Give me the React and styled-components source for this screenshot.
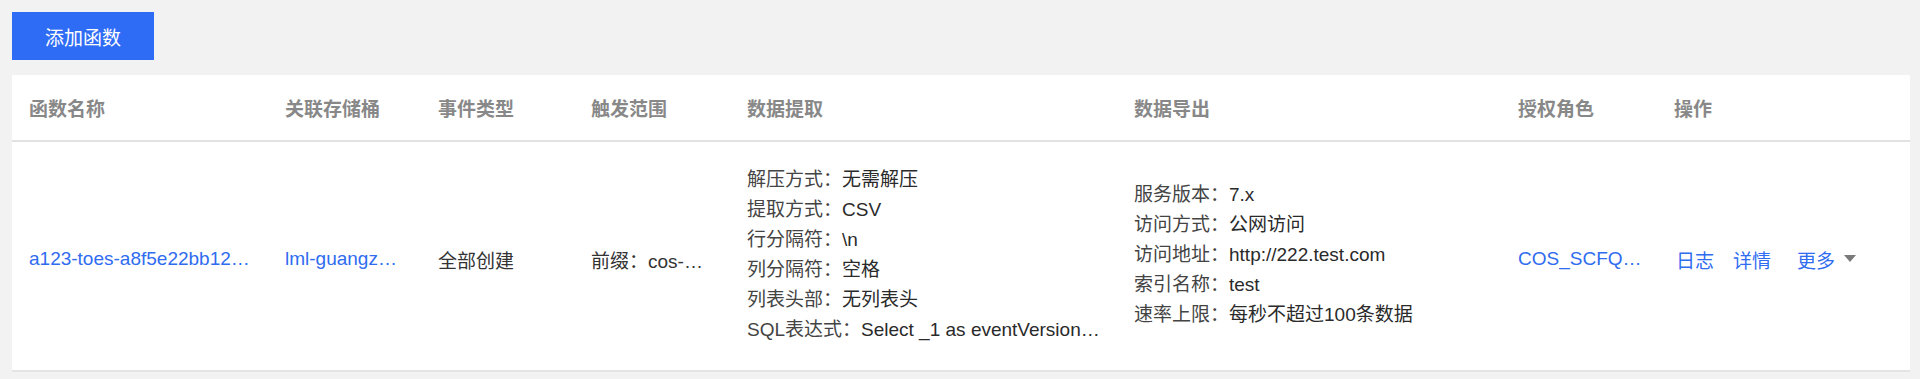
import React from "react";
import styled, { createGlobalStyle } from "styled-components";

const COLUMNS = "256px 153px 153px 156px 387px 384px 156px 1fr";

const GlobalStyle = createGlobalStyle`
    html, body {
        margin: 0;
        padding: 0;
        background: #f2f2f2;
    }
    body {
        font-family: "Liberation Sans", Arial, "Noto Sans CJK SC", sans-serif;
        font-size: 19px;
        color: #333;
    }
`;

const Page = styled.div`
    padding: 12px 10px 12px 12px;
    display: flex;
    flex-direction: column;
    align-items: flex-start;
    gap: 15px;
`;

const PrimaryButton = styled.button`
    width: 142px;
    height: 48px;
    border: none;
    border-radius: 0;
    background: #2f6cf6;
    color: #fff;
    font-family: inherit;
    font-size: 19px;
    cursor: pointer;
    padding: 0;
`;

const Card = styled.div`
    align-self: stretch;
    background: #fff;
    box-shadow: 0 2px 0 #e4e4e4;
`;

const Row = styled.div`
    display: grid;
    grid-template-columns: ${COLUMNS};
    align-items: center;
    height: ${props => props.height}px;
    border-bottom: ${props => props.divider ? "2px solid #e2e2e2" : "none"};
`;

const HeadCell = styled.div`
    padding-left: 17px;
    padding-top: 0;
    color: #888;
    font-weight: bold;
    white-space: nowrap;
`;

const Cell = styled.div`
    padding-left: 17px;
    padding-top: ${props => props.list ? 0 : 6}px;
    padding-bottom: ${props => props.list ? 2 : 0}px;
    white-space: nowrap;
    color: ${props => props.link ? "#2f6cf0" : "#333"};
`;

const InfoList = styled.div`
    display: flex;
    flex-direction: column;
    line-height: 30px;
`;

const InfoLine = styled.div`
    white-space: nowrap;
    color: #444;

    span {
        color: #2a2a2a;
    }
`;

const Actions = styled.div`
    display: flex;
    align-items: center;
    padding-left: 19px;
    padding-top: 6px;
    color: #2f6cf0;
    white-space: nowrap;
`;

const ActionLink = styled.span`
    margin-right: ${props => props.gap}px;
    cursor: pointer;
`;

const Caret = styled.svg`
    margin-left: 9px;
    margin-top: -2px;
`;

const extraction = [
    ["解压方式：", "无需解压"],
    ["提取方式：", "CSV"],
    ["行分隔符：", "\\n"],
    ["列分隔符：", "空格"],
    ["列表头部：", "无列表头"],
    ["SQL表达式：", "Select _1 as eventVersion…"],
];

const exporting = [
    ["服务版本：", "7.x"],
    ["访问方式：", "公网访问"],
    ["访问地址：", "http://222.test.com"],
    ["索引名称：", "test"],
    ["速率上限：", "每秒不超过100条数据"],
];

const headers = ["函数名称", "关联存储桶", "事件类型", "触发范围", "数据提取", "数据导出", "授权角色", "操作"];

export default function App() {
    return (
        <Page>
            <GlobalStyle />
            <PrimaryButton>添加函数</PrimaryButton>
            <Card>
                <Row height={65} divider>
                    {headers.map(h => <HeadCell key={h}>{h}</HeadCell>)}
                </Row>
                <Row height={228}>
                    <Cell link>a123-toes-a8f5e22bb12…</Cell>
                    <Cell link>lml-guangz…</Cell>
                    <Cell>全部创建</Cell>
                    <Cell>前缀：cos-…</Cell>
                    <Cell list>
                        <InfoList>
                            {extraction.map(([k, v]) => (
                                <InfoLine key={k}>{k}<span>{v}</span></InfoLine>
                            ))}
                        </InfoList>
                    </Cell>
                    <Cell list>
                        <InfoList>
                            {exporting.map(([k, v]) => (
                                <InfoLine key={k}>{k}<span>{v}</span></InfoLine>
                            ))}
                        </InfoList>
                    </Cell>
                    <Cell link>COS_SCFQ…</Cell>
                    <Actions>
                        <ActionLink gap={19}>日志</ActionLink>
                        <ActionLink gap={26}>详情</ActionLink>
                        <ActionLink gap={0}>更多</ActionLink>
                        <Caret width="12" height="7" viewBox="0 0 12 7">
                            <path d="M0 0 L12 0 L6 7 Z" fill="#7a7a7a" />
                        </Caret>
                    </Actions>
                </Row>
            </Card>
        </Page>
    );
}
